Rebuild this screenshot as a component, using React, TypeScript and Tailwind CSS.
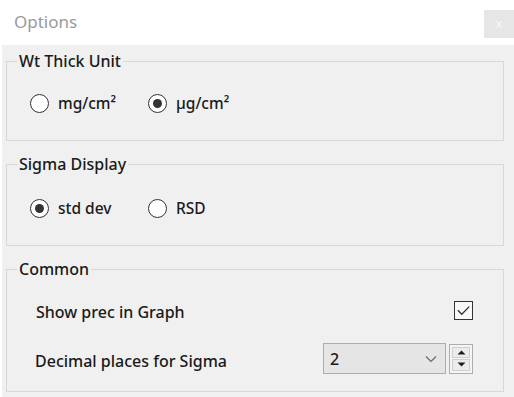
function Radio({ checked, label, first }: { checked: boolean; label: string; first?: boolean }) {
  return (
    <div className={`flex items-center h-[20px] ${first ? "w-[118px]" : ""}`}>
      <div className="w-[19px] h-[19px] rounded-full border border-[#333333] bg-white flex items-center justify-center shrink-0">
        {checked && <div className="w-[9px] h-[9px] rounded-full bg-[#333333]" />}
      </div>
      <span className="ml-[9px] text-[15.5px] font-medium leading-[20px] text-[#1a1a1a]">{label}</span>
    </div>
  );
}

export default function App() {
  return (
    <div
      className="w-[514px] h-[397px] bg-white flex flex-col overflow-hidden"
      style={{ fontFamily: '"Noto Sans", "Open Sans", sans-serif' }}
    >
      <div className="h-[45px] flex items-start justify-between shrink-0">
        <div className="pl-[14px] pt-[10px] text-[17px] leading-[24px] text-[#9a9a9a]">Options</div>
        <div className="mt-[10px] w-[30px] h-[28px] bg-[#e6e6e6] flex items-center justify-center text-[#f8f8f8] text-[12px]">
          x
        </div>
      </div>
      <div className="flex-1 ml-[2px] bg-[#f0f0f0] pl-[4px] pr-[10px] pt-[6px] flex flex-col">
        <fieldset className="border border-[#d8d8d8] px-[10px] pb-[27px]">
          <legend className="px-[2px] text-[16px] font-medium leading-[20px] text-[#1a1a1a]">Wt Thick Unit</legend>
          <div className="flex items-center pt-[22px] ml-[13px]">
            <Radio checked={false} label="mg/cm²" first />
            <Radio checked={true} label="µg/cm²" />
          </div>
        </fieldset>
        <fieldset className="mt-[13px] border border-[#d8d8d8] px-[10px] pb-[27px]">
          <legend className="px-[2px] text-[16px] font-medium leading-[20px] text-[#1a1a1a]">Sigma Display</legend>
          <div className="flex items-center pt-[24px] ml-[13px]">
            <Radio checked={true} label="std dev" first />
            <Radio checked={false} label="RSD" />
          </div>
        </fieldset>
        <fieldset className="mt-[13px] border border-[#d8d8d8] px-[10px] pb-[17px]">
          <legend className="px-[2px] text-[16px] font-medium leading-[20px] text-[#1a1a1a]">Common</legend>
          <div className="flex items-center justify-between pt-[21px] ml-[19px] mr-[20px] h-[41px]">
            <span className="text-[16px] font-medium leading-[20px] text-[#1a1a1a] mt-[3px]">Show prec in Graph</span>
            <div className="w-[19px] h-[19px] border border-[#333333] bg-[#f8f8f8] flex items-center justify-center">
              <svg width="15" height="15" viewBox="0 0 15 15">
                <path d="M1.8 7.3 L5.8 11.3 L13.2 3.6" fill="none" stroke="#333333" strokeWidth="1.3" />
              </svg>
            </div>
          </div>
          <div className="flex items-center justify-between mt-[23px] ml-[18px] mr-[20px]">
            <span className="text-[16px] font-medium leading-[20px] text-[#1a1a1a] mt-[4px]">Decimal places for Sigma</span>
            <div className="flex items-center">
              <div className="w-[123px] h-[31px] bg-[#e5e5e5] border border-[#adadad] flex items-center justify-between pl-[6px] pr-[8px]">
                <span className="text-[16px] font-medium leading-[20px] text-[#1a1a1a]">2</span>
                <svg width="12" height="8" viewBox="0 0 12 8">
                  <path d="M1 1.5 L6 6.5 L11 1.5" fill="none" stroke="#6a6a6a" strokeWidth="1.2" />
                </svg>
              </div>
              <div className="ml-[3px] w-[24px] h-[30px] border border-[#adadad] bg-[#f5f5f5] flex flex-col p-[2px] gap-[1px]">
                <div className="flex-1 border border-[#cfcfcf] bg-[#ececec] flex items-center justify-center">
                  <svg width="9" height="5" viewBox="0 0 9 5">
                    <path d="M0.5 4.5 L4.5 0.5 L8.5 4.5 Z" fill="#1e1e1e" />
                  </svg>
                </div>
                <div className="flex-1 border border-[#cfcfcf] bg-[#ececec] flex items-center justify-center">
                  <svg width="9" height="5" viewBox="0 0 9 5">
                    <path d="M0.5 0.5 L4.5 4.5 L8.5 0.5 Z" fill="#1e1e1e" />
                  </svg>
                </div>
              </div>
            </div>
          </div>
        </fieldset>
      </div>
    </div>
  );
}
